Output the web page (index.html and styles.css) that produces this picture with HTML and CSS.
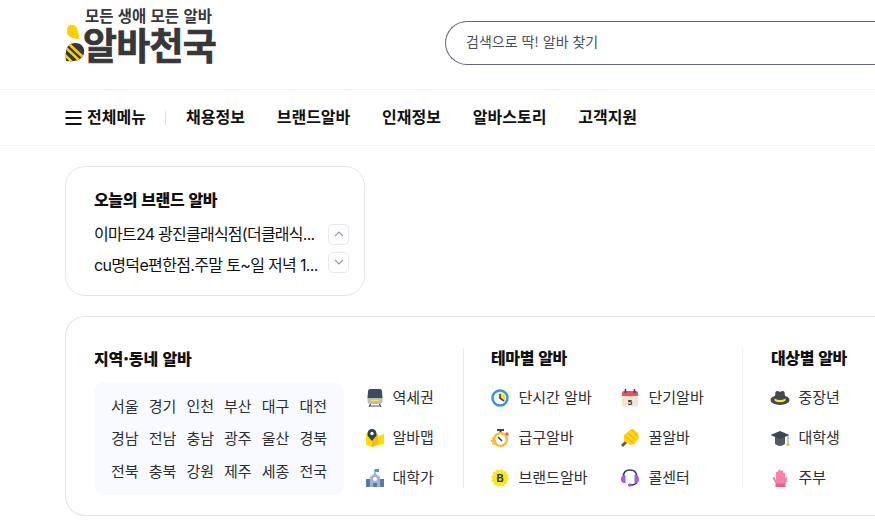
FILE: index.html
```html
<!DOCTYPE html>
<html lang="ko">
<head>
<meta charset="utf-8">
<title>알바천국</title>
<link rel="stylesheet" href="styles.css">
</head>
<body>
<header class="top">
  <a class="logo">
    <span class="slogan">모든 생애 모든 알바</span>
    <span class="brand">
      <svg class="bee" width="20" height="38" viewBox="0 0 20 38"><path d="M2 5C2-1 9-2 12 3c1.500 3 2 7 2 11C8 14 1 12 2 5Z" fill="#ffd000"/><clipPath id="b"><path d="M1 36C0 27 1 18 10 18c7 0 10 5 9 10-1 7-9 9-18 8Z"/></clipPath><g clip-path="url(#b)"><path fill="#38383a" d="M0 16h20v22H0z"/><path d="m-2 28 12 12M-1 21l18 17M4 19l16 15" stroke="#ffd000" stroke-width="2.600"/></g></svg>
      <span class="name">알바천국</span>
    </span>
  </a>
  <div class="search">검색으로 딱! 알바 찾기</div>
</header>
<nav class="nav">
  <a class="all"><svg width="17" height="14" viewBox="0 0 17 14"><path d="M.5 1h16M.5 7h16M.5 13h16" stroke="#111" stroke-width="1.800"/></svg><span>전체메뉴</span></a>
  <i class="bar"></i>
  <div class="links"><a>채용정보</a><a>브랜드알바</a><a>인재정보</a><a>알바스토리</a><a>고객지원</a></div>
</nav>
<main>
  <section class="today">
    <h2>오늘의 브랜드 알바</h2>
    <div class="row"><p class="job1">이마트24 광진클래식점(더클래식...</p><button><svg width="10" height="6" viewBox="0 0 10 6"><path d="m1 5 4-4 4 4"/></svg></button></div>
    <div class="row"><p class="job2">cu명덕e편한점.주말 토~일 저녁 1...</p><button class="down"><svg width="10" height="6" viewBox="0 0 10 6"><path d="m1 1 4 4 4-4"/></svg></button></div>
  </section>
  <section class="panel">
    <div class="area">
      <h2 class="area-title">지역·동네 알바</h2>
      <div class="area-body">
        <div class="regions">
          <a>서울</a><a>경기</a><a>인천</a><a>부산</a><a>대구</a><a>대전</a>
          <a>경남</a><a>전남</a><a>충남</a><a>광주</a><a>울산</a><a>경북</a>
          <a>전북</a><a>충북</a><a>강원</a><a>제주</a><a>세종</a><a>전국</a>
        </div>
        <ul class="list">
          <li><svg viewBox="0 0 18 18"><path d="m5 14-2 4m10-4 2 4M4 17h10" stroke="#555" stroke-width="1.2"/><rect x="1.500" y="6" width="15" height="9" rx="3" fill="#b7bac2"/><path d="M4 0h10q2 0 2 3l.500 6h-15L2 3q0-3 2-3Z" fill="#3d4c5d"/><path d="M4.500 11.500h9" stroke="#ffe322" stroke-width="1.800"/></svg>역세권</li>
          <li><svg viewBox="0 0 18 18"><path d="m0 5 6 2v11l-6-2z" fill="#ffdc00"/><path d="m6 7 6-2v11l-6 2z" fill="#f8bd08"/><path d="m12 7 6-2v10l-6 2z" fill="#ffdf00"/><path d="M6 12C3 8 1 7 1.500 4.500a4.500 4.500 0 0 1 9 0C11 7 9 8 6 12Z" fill="#304157"/><circle cx="6" cy="4.500" r="1.700" fill="#fff"/></svg>알바맵</li>
          <li><svg viewBox="0 0 18 18"><path d="M9 0v6" stroke="#5882b4"/><path d="M9 0h4v3H9z" fill="#389cf4"/><path d="M0 10h18v8H0z" fill="#5979a5"/><path d="m4 8 5-4 5 4v10H4z" fill="#a0b3d2"/><circle cx="9" cy="10" r="2" fill="#fff"/><path d="M7 14h4v4H7z" fill="#5979a5"/></svg>대학가</li>
        </ul>
      </div>
    </div>
    <div class="theme">
      <h2>테마별 알바</h2>
      <div class="theme-lists">
        <ul class="list">
          <li><svg viewBox="0 0 18 18"><circle cx="9" cy="9" r="7.500" fill="#fff" stroke="#2f93f5" stroke-width="2.400"/><path d="M9 3a6 6 0 0 1 5 9L9 9z" fill="#ffe42a"/><path d="M9 5v4l4 3" fill="none" stroke="#283448" stroke-width="1.500"/></svg>단시간 알바</li>
          <li><svg viewBox="0 0 18 18"><path d="M6 1h7M9.500 1v3" stroke="#3b4555" stroke-width="2"/><circle cx="9.500" cy="10.500" r="6.400" fill="#fff" stroke="#ffbd20" stroke-width="2.400"/><path d="m7 8 4 4" stroke="#283448" stroke-width="1.500"/><path d="m15 4 2 2" stroke="#f04965" stroke-width="2.500"/><path d="M0 12h5M1 9.500h3M1 14.500h5" stroke="#ffb930" stroke-width="1.800"/></svg>급구알바</li>
          <li><svg viewBox="0 0 18 18"><circle cx="9" cy="9" r="7.800" fill="#fbe51d"/><circle cx="9" cy="9" r="8" fill="none" stroke="#fbe51d" stroke-width="1.500" stroke-dasharray="2.400 1.800"/><text x="9" y="12.500" class="badge">B</text></svg>브랜드알바</li>
        </ul>
        <ul class="list">
          <li><svg viewBox="0 0 18 18"><rect x="1" y="2" width="16" height="15.500" rx="2" fill="#f4e5d1"/><path d="M1 7V4q0-2 2-2h12q2 0 2 2v3Z" fill="#f04c69"/><path d="M4.500 0v4m9-4v4" stroke="#3b4351" stroke-width="1.600"/><text x="9" y="15.500" class="date">5</text></svg>단기알바</li>
          <li><svg viewBox="0 0 18 18"><path d="m1 17 5-5" stroke="#805447" stroke-width="3"/><path d="m9 1 3-1 5 4 1 5-4 6-5 1-6-4 0-6Z" fill="#ffd51b"/><path d="m4 7 8 7M7 4l8 7m-5-10 7 6" stroke="#f4b700" stroke-width="1.200"/></svg>꿀알바</li>
          <li><svg viewBox="0 0 18 18"><path d="M2.500 8C2 3 5 1 9 1s7 2 6.500 7v5c0 2-2 3-6 3" fill="none" stroke="#303b57" stroke-width="1.500"/><path d="M4.500 6v8C1 14 0 13 0 10s2-4 4.500-4Zm9 0v8c3.500 0 4.500-1 4.500-4s-2-4-4.500-4Z" fill="#a95be5"/><rect x="7" y="14.500" width="4" height="3" rx="1.500" fill="#a34fdc"/></svg>콜센터</li>
        </ul>
      </div>
    </div>
    <div class="target">
      <h2>대상별 알바</h2>
      <ul class="list">
        <li><svg viewBox="0 0 18 18"><ellipse cx="9" cy="11" rx="9.500" ry="5" fill="#414853"/><path d="M3.500 11 4.500 3q1.500-2 4.500 0 3-2 4.500 0l1 8q-5.500 2-11 0Z" fill="#414853"/><path d="M3.500 9.500q5.500 3 11 0v2.200q-5.500 3-11 0z" fill="#ffe81e"/></svg>중장년</li>
        <li><svg viewBox="0 0 18 18"><path d="M4 8h10v7q-5 4-10 0z" fill="#535c68"/><path d="m-.500 6 9.500-4 9.500 4L9 10z" fill="#3d4651"/><path d="M17 7v7" stroke="#93abd0" stroke-width="1.200"/><circle cx="17" cy="15.500" r="1.600" fill="#ffb91d"/></svg>대학생</li>
        <li><svg viewBox="0 0 18 18"><path d="m5 15-3-5c-1-2 1-3 2-1l1 2V4c0-2 2.200-2 2.200 0V2c0-2 2.400-2 2.400 0v1c0-2 2.400-2 2.400 0v2c0-2 2.200-2 2.200 0v4c2-2 3-1 2 1v2l-2 3Z" fill="#f582ad"/><path d="M4.500 14.500h10V18h-10z" fill="#ed5c8e"/></svg>주부</li>
      </ul>
    </div>
  </section>
</main>
</body>
</html>
```
FILE: styles.css
```css
* { box-sizing: border-box; margin: 0; padding: 0; }
body { height: 530px; overflow: hidden; background: #fff; color: #111; font-family: "Noto Sans CJK KR", sans-serif; font-size: 15px; white-space: nowrap; }
.top { display: flex; height: 90px; padding-left: 65px; border-bottom: 1px solid #f0f1f3; }
.logo { flex: none; width: 380px; padding-top: 6px; color: #38383a; }
.slogan { display: block; margin-left: 20px; font-size: 15.5px; font-weight: 700; line-height: 18px; letter-spacing: -.02px; }
.brand { display: flex; height: 38px; margin-top: 1px; }
.bee { flex: none; }
.name { margin-left: -2px; font-size: 37px; font-weight: 700; line-height: 38px; letter-spacing: -.8px; -webkit-text-stroke: .7px #38383a; }
.search { flex: 1; height: 44px; margin-top: 21px; padding-left: 20px; border: 1px solid #626977; border-right: 0; border-radius: 22px 0 0 22px; color: #4b4f57; font-size: 14px; line-height: 39px; }
.nav { display: flex; align-items: center; height: 56px; padding-left: 65px; border-bottom: 1px solid #f0f1f3; font-size: 16px; font-weight: 700; line-height: 24px; }
.all { display: flex; align-items: center; gap: 5px; width: 100px; }
.all span, .links { padding-bottom: 3px; }
.bar { width: 1px; height: 14px; background: #dce0e5; }
.links { display: flex; gap: 31.8px; margin-left: 20px; }
main { padding: 20px 0 0 65px; }
h2 { font-size: 16px; font-weight: 900; line-height: 24px; letter-spacing: -.35px; }
.today { width: 300px; height: 130px; padding: 21px 15px 0 28px; border: 1px solid #e3e5e9; border-radius: 20px; }
.row { display: flex; align-items: center; justify-content: space-between; height: 30px; font-family: Inter, "Noto Sans CJK KR", sans-serif; font-size: 16px; line-height: 24px; }
.today h2 { line-height: 23px; }
h2 + .row { margin-top: 8px; }
.job1 { letter-spacing: -.75px; }
.job2 { padding-top: 1px; letter-spacing: -.66px; }
button { display: grid; place-items: center; flex: none; width: 21px; height: 21px; border: 1px solid #e6e8ec; border-radius: 5px; background: #fff; }
.down { margin-top: -4px; }
button path { fill: none; stroke: #9298a1; stroke-width: 1.1; }
.panel { display: flex; height: 200px; margin-top: 20px; padding: 31px 0 0 28px; border: 1px solid #e3e5e9; border-right: 0; border-radius: 20px 0 0 20px; }
.area { flex: none; width: 370px; height: 140px; border-right: 1px solid #e8eaee; }
.area-title { line-height: 21px; letter-spacing: -.1px; }
.area-body { display: flex; gap: 22px; margin-top: 13px; }
.regions { display: grid; grid-template-columns: repeat(6, 28px); grid-auto-rows: 32.3px; column-gap: 9.7px; width: 250px; height: 113px; padding: 8px 17px; border-radius: 10px; background: #f8faff; line-height: 32px; color: #2c2f35; }
.list { list-style: none; color: #2c2f35; }
.list li { display: flex; align-items: center; gap: 9.5px; height: 40px; line-height: 20px; padding-bottom: 3px; }
.area .list { margin-top: -4px; }
.area .list li { gap: 8.5px; padding-bottom: 2px; }
.list svg { width: 18px; height: 18px; flex: none; overflow: visible; position: relative; top: 1px; }
.theme { flex: none; width: 279px; height: 140px; padding-left: 27px; border-right: 1px solid #f0f1f4; }
.theme h2, .target h2 { line-height: 19px; }
.theme-lists { display: grid; grid-template-columns: 130px 110px; margin-top: 11px; }
.target { padding-left: 28px; }
.target .list { margin-top: 11px; }
.badge, .date { font: 900 10px "Liberation Sans", sans-serif; text-anchor: middle; fill: #202a38; }
.date { font-size: 8px; }
```
